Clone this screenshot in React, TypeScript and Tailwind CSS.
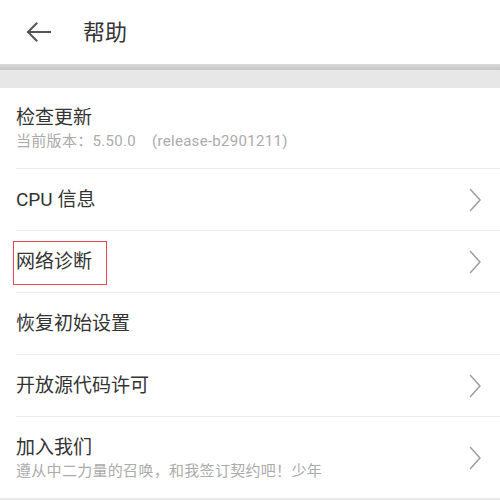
import React from 'react';

interface HelpItem {
  title: string;
  subtitle?: string;
  arrow: boolean;
  highlight?: boolean;
}

const items: HelpItem[] = [
  { title: '检查更新', subtitle: '当前版本：5.50.0    (release-b2901211)', arrow: false },
  { title: 'CPU 信息', arrow: true },
  { title: '网络诊断', arrow: true, highlight: true },
  { title: '恢复初始设置', arrow: false },
  { title: '开放源代码许可', arrow: true },
  { title: '加入我们', subtitle: '遵从中二力量的召唤，和我签订契约吧！少年', arrow: true },
];

const BackArrow = () => (
  <svg width="25" height="20" viewBox="0 0 25 20" fill="none" stroke="#555" strokeWidth="2" strokeLinecap="square">
    <path d="M2 10H24" />
    <path d="M10.5 1.5L2 10l8.5 8.5" />
  </svg>
);

const Chevron = () => (
  <svg width="12" height="24" viewBox="0 0 12 24" fill="none" stroke="#9e9e9e" strokeWidth="1.5" strokeLinecap="round" strokeLinejoin="round">
    <path d="M1.5 1.5l9.5 10.5L1.5 22.5" />
  </svg>
);

const HelpRow = ({ item, last }: { item: HelpItem; last: boolean }) => {
  const tall = !!item.subtitle;
  return (
    <div
      className={
        'ml-4 flex items-center pr-[19px] ' +
        (tall ? 'h-[81px] ' : 'h-[62px] ') +
        (last ? '' : 'border-b border-[#ececec]')
      }
    >
      <div className="flex-1 min-w-0">
        {item.highlight ? (
          <div className="-ml-[3px] mt-[3px] flex h-[44px] w-[94px] items-center border border-[#e3474f] pb-[2px] pl-[2px] text-[19px] text-[#333]">
            {item.title}
          </div>
        ) : (
          <div className="text-[19px] leading-[26px] text-[#333]">{item.title}</div>
        )}
        {item.subtitle && (
          <div className="whitespace-pre text-[15px] leading-[20px] tracking-[0.3px] text-[#ababab]">{item.subtitle}</div>
        )}
      </div>
      {item.arrow && <Chevron />}
    </div>
  );
};

export default function App() {
  return (
    <div
      className="h-[500px] w-[500px] overflow-hidden bg-white"
      style={{ fontFamily: 'Roboto, "Noto Sans CJK SC", sans-serif' }}
    >
      <div className="flex h-[64px] items-center pl-[26px]">
        <BackArrow />
        <span className="ml-[32px] text-[22px] text-[#333]">帮助</span>
      </div>
      <div className="h-[6px] bg-gradient-to-b from-[#dadada] to-[#c6c6c6]" />
      <div className="h-[18px] bg-[#e7e7e7]" />
      <div>
        {items.map((item, i) => (
          <HelpRow key={item.title} item={item} last={i === items.length - 1} />
        ))}
      </div>
      <div className="h-[10px] bg-[#ebebeb]" />
    </div>
  );
}
